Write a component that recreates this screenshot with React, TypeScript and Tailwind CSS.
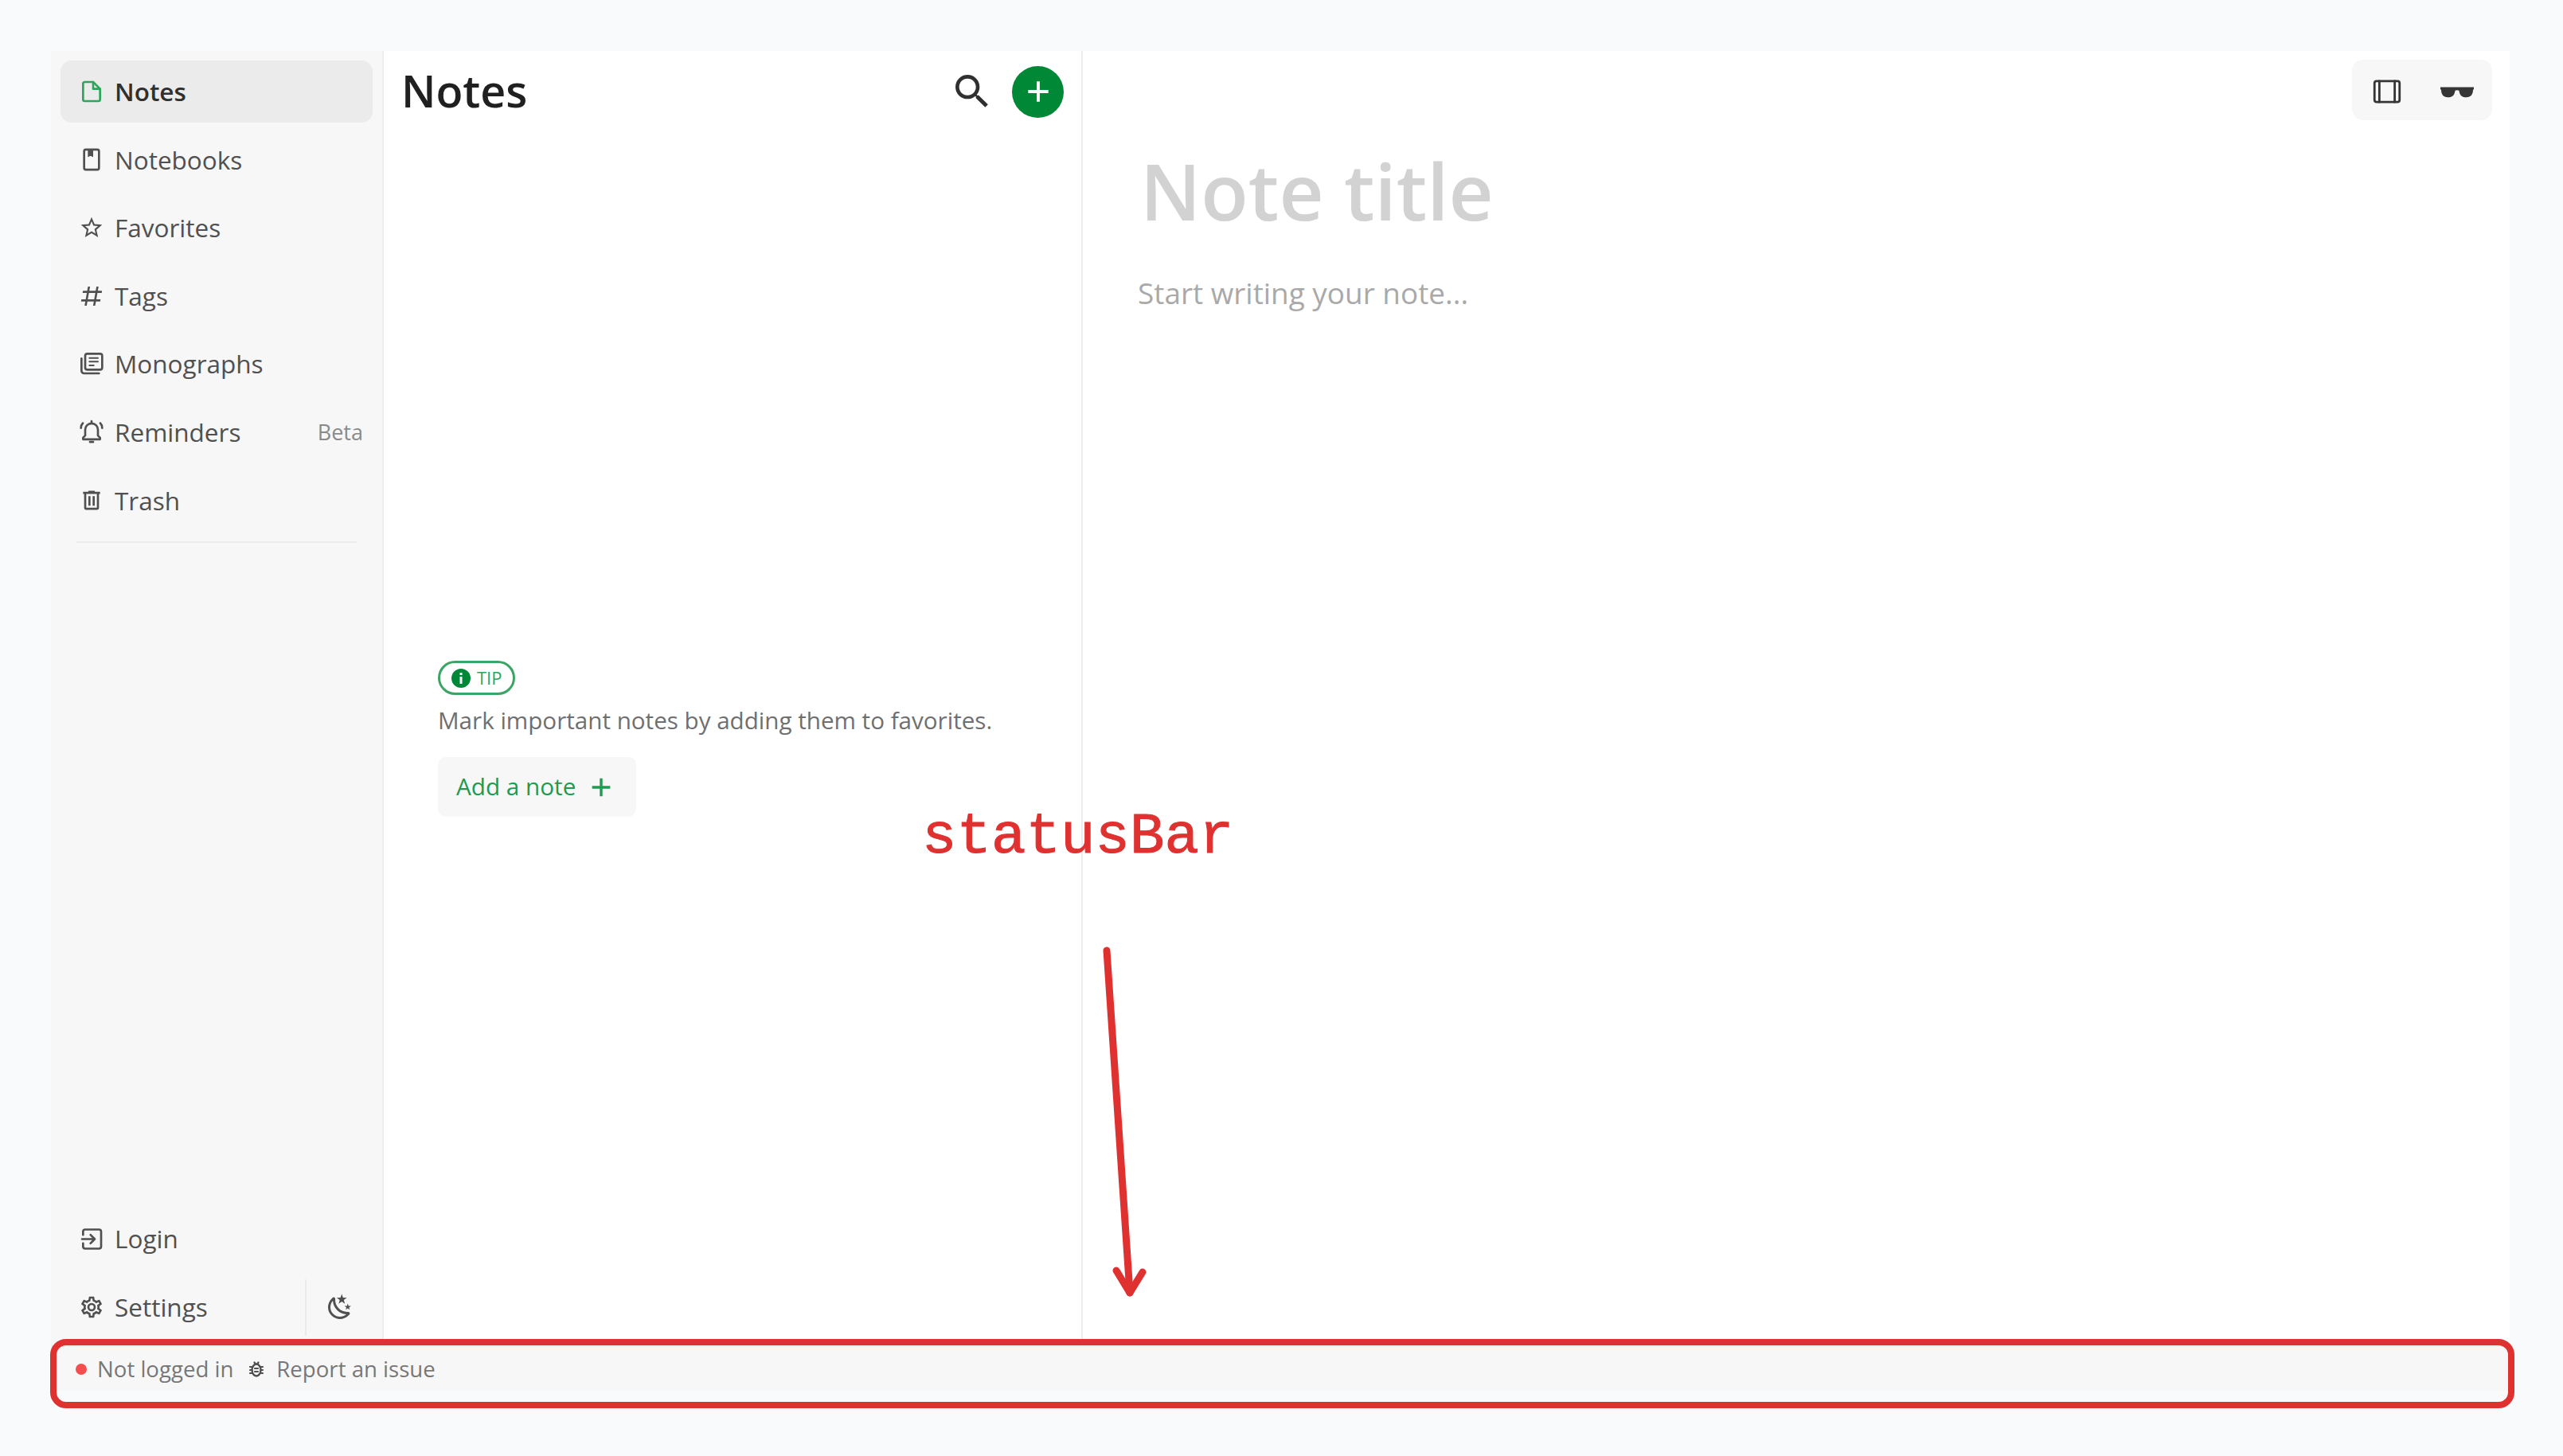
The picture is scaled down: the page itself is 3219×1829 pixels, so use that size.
import React from 'react';

const paths = {
  star: 'M12,15.39L8.24,17.66L9.23,13.38L5.91,10.5L10.29,10.13L12,6.09L13.71,10.13L18.09,10.5L14.77,13.38L15.76,17.66M22,9.24L14.81,8.63L12,2L9.19,8.62L2,9.24L7.45,13.97L5.82,21L12,17.27L18.18,21L16.54,13.97L22,9.24Z',
  pound: 'M5.41,21L6.12,17H2.12L2.47,15H6.47L7.53,9H3.53L3.88,7H7.88L8.59,3H10.59L9.88,7H15.88L16.59,3H18.59L17.88,7H21.88L21.53,9H17.53L16.47,15H20.47L20.12,17H16.12L15.41,21H13.41L14.12,17H8.12L7.41,21H5.41M9.53,9L8.47,15H14.47L15.53,9H9.53Z',
  trash: 'M9,3V4H4V6H5V19A2,2 0 0,0 7,21H17A2,2 0 0,0 19,19V6H20V4H15V3H9M7,6H17V19H7V6M9,8V17H11V8H9M13,8V17H15V8H13Z',
  cog: 'M12,8A4,4 0 0,1 16,12A4,4 0 0,1 12,16A4,4 0 0,1 8,12A4,4 0 0,1 12,8M12,10A2,2 0 0,0 10,12A2,2 0 0,0 12,14A2,2 0 0,0 14,12A2,2 0 0,0 12,10M10,22C9.75,22 9.54,21.82 9.5,21.58L9.13,18.93C8.5,18.68 7.96,18.34 7.44,17.94L4.95,18.95C4.73,19.03 4.46,18.95 4.34,18.73L2.34,15.27C2.21,15.05 2.27,14.78 2.46,14.63L4.57,12.97L4.5,12L4.57,11L2.46,9.37C2.27,9.22 2.21,8.95 2.34,8.73L4.34,5.27C4.46,5.05 4.73,4.96 4.95,5.05L7.44,6.05C7.96,5.66 8.5,5.32 9.13,5.07L9.5,2.42C9.54,2.18 9.75,2 10,2H14C14.25,2 14.46,2.18 14.5,2.42L14.87,5.07C15.5,5.32 16.04,5.66 16.56,6.05L19.05,5.05C19.27,4.96 19.54,5.05 19.66,5.27L21.66,8.73C21.79,8.95 21.73,9.22 21.54,9.37L19.43,11L19.5,12L19.43,13L21.54,14.63C21.73,14.78 21.79,15.05 21.66,15.27L19.66,18.73C19.54,18.95 19.27,19.04 19.05,18.95L16.56,17.95C16.04,18.34 15.5,18.68 14.87,18.93L14.5,21.58C14.46,21.82 14.25,22 14,22H10M11.25,4L10.88,6.61C9.68,6.86 8.62,7.5 7.85,8.39L5.44,7.35L4.69,8.65L6.8,10.2C6.4,11.37 6.4,12.64 6.8,13.8L4.68,15.36L5.43,16.66L7.86,15.62C8.63,16.5 9.68,17.14 10.87,17.38L11.24,20H12.76L13.13,17.39C14.32,17.14 15.37,16.5 16.14,15.62L18.57,16.66L19.32,15.36L17.2,13.81C17.6,12.64 17.6,11.37 17.2,10.2L19.31,8.65L18.56,7.35L16.15,8.39C15.38,7.5 14.32,6.86 13.12,6.62L12.75,4H11.25Z',
  moon: 'M17.75,4.09L15.22,6.03L16.13,9.09L13.5,7.28L10.87,9.09L11.78,6.03L9.25,4.09L12.44,4L13.5,1L14.56,4L17.75,4.09M21.25,11L19.61,12.25L20.2,14.23L18.5,13.06L16.8,14.23L17.39,12.25L15.75,11L17.81,10.95L18.5,9L19.19,10.95L21.25,11M18.97,15.95C19.8,15.87 20.69,17.05 20.16,17.8C19.84,18.25 19.5,18.67 19.08,19.07C15.17,23 8.84,23 4.94,19.07C1.03,15.17 1.03,8.83 4.94,4.93C5.34,4.53 5.76,4.17 6.21,3.85C6.96,3.32 8.14,4.21 8.06,5.04C7.79,7.9 8.75,10.87 10.95,13.06C13.14,15.26 16.1,16.22 18.97,15.95M17.33,17.97C14.5,17.81 11.7,16.64 9.53,14.5C7.36,12.31 6.2,9.5 6.04,6.68C3.23,9.82 3.34,14.64 6.35,17.66C9.37,20.67 14.19,20.78 17.33,17.97Z',
  magnify: 'M9.5,3A6.5,6.5 0 0,1 16,9.5C16,11.11 15.41,12.59 14.44,13.73L14.71,14H15.5L20.5,19L19,20.5L14,15.5V14.71L13.73,14.44C12.59,15.41 11.11,16 9.5,16A6.5,6.5 0 0,1 3,9.5A6.5,6.5 0 0,1 9.5,3M9.5,5C7,5 5,7 5,9.5C5,12 7,14 9.5,14C12,14 14,12 14,9.5C14,7 12,5 9.5,5Z',
  sunglasses: 'M1.5 9.2H22.5V10.6L22 10.9C22 13.8 20.6 15.6 17.8 15.6H17C14.8 15.6 13.6 14 13.2 11.4C12.4 11 11.6 11 10.8 11.4C10.4 14 9.2 15.6 7 15.6H6.2C3.4 15.6 2 13.8 2 10.9L1.5 10.6Z',
};

function Svg({ size, className, children }: { size: number; className?: string; children: React.ReactNode }) {
  return (
    <svg width={size} height={size} viewBox="0 0 24 24" fill="none" stroke="currentColor" strokeWidth={2} strokeLinecap="round" strokeLinejoin="round" className={className}>
      {children}
    </svg>
  );
}

function Solid({ d, size = 32, className }: { d: string; size?: number; className?: string }) {
  return (
    <svg width={size} height={size} viewBox="0 0 24 24" fill="currentColor" className={className}>
      <path d={d} />
    </svg>
  );
}

const NoteIcon = () => (
  <Svg size={34} className="text-[#2ea55a]">
    <path d="M13.5 3H5.5A1.5 1.5 0 0 0 4 4.5v15A1.5 1.5 0 0 0 5.5 21h13a1.5 1.5 0 0 0 1.5-1.5V9.5z" />
    <path d="M13.5 3v6.5H20" />
  </Svg>
);

const NotebookIcon = () => (
  <Svg size={35}>
    <rect x="5" y="2.5" width="14" height="19" rx="1.6" />
    <path d="M9 3h4v6l-2-1.4L9 9z" fill="currentColor" strokeWidth={1} />
  </Svg>
);

const MonographIcon = () => (
  <Svg size={36}>
    <path d="M2.5 7v11.5A2.5 2.5 0 0 0 5 21h14" />
    <rect x="6" y="2.5" width="16" height="15" rx="2" />
    <path d="M10 6.5h8M10 10h8M10 13.5h4" strokeWidth={1.5} />
  </Svg>
);

const BellIcon = () => (
  <Svg size={35}>
    <path d="M12 4a6 6 0 0 1 6 6v5.5l2 2V19H4v-1.5l2-2V10a6 6 0 0 1 6-6z" />
    <path d="M10.5 21.5h3M12 2v2M3.8 3.8C2.6 5 2 6.6 2 8.4M20.2 3.8C21.4 5 22 6.6 22 8.4" />
  </Svg>
);

const LoginIcon = () => (
  <Svg size={33}>
    <path d="M4 8V5a2 2 0 0 1 2-2h13a2 2 0 0 1 2 2v14a2 2 0 0 1-2 2H6a2 2 0 0 1-2-2v-3" />
    <path d="M3 12h12M11 8l4 4-4 4" />
  </Svg>
);

const BugIcon = () => (
  <Svg size={24}>
    <ellipse cx="12" cy="13" rx="5.5" ry="7.5" strokeWidth={2.4} />
    <path d="M9.5 3.5l1.4 2M14.5 3.5l-1.4 2M4 9h2.5M17.5 9H20M4 13h2.5M17.5 13H20M4 17h2.5M17.5 17H20M10 11h4M10 15h4" strokeWidth={2.2} />
  </Svg>
);

const PaneIcon = () => (
  <Svg size={42}>
    <rect x="3" y="4.5" width="18" height="15" rx="1.5" strokeWidth={1.6} />
    <path d="M6.5 4.5v15M17.5 4.5v15" strokeWidth={1.6} />
  </Svg>
);

function PlusIcon({ size, className }: { size: number; className?: string }) {
  return (
    <Svg size={size} className={className}>
      <path d="M12 4v16M4 12h16" strokeLinecap="butt" strokeWidth={2.4} />
    </Svg>
  );
}

const navItems = [
  { label: 'Notes', icon: <NoteIcon />, active: true },
  { label: 'Notebooks', icon: <NotebookIcon /> },
  { label: 'Favorites', icon: <Solid d={paths.star} /> },
  { label: 'Tags', icon: <Solid d={paths.pound} size={34} /> },
  { label: 'Monographs', icon: <MonographIcon /> },
  { label: 'Reminders', icon: <BellIcon />, badge: 'Beta' },
  { label: 'Trash', icon: <Solid d={paths.trash} size={35} /> },
];

function NavRow({ label, icon, active, badge }: { label: string; icon: React.ReactNode; active?: boolean; badge?: string }) {
  return (
    <div className={`flex h-[78px] items-center rounded-[14px] pl-[23px] pr-[12px] ${active ? 'bg-[#ebebeb] font-semibold text-[#303030]' : 'text-[#505050]'}`}>
      <span className="mr-[13px] flex w-[32px] justify-center">{icon}</span>
      <span className="flex-1">{label}</span>
      {badge && <span className="text-[27px] text-[#8a8a8a]">{badge}</span>}
    </div>
  );
}

function Sidebar() {
  return (
    <aside className="flex w-[418px] flex-col justify-between border-r-2 border-[#ededed] bg-[#f7f7f7] px-[12px] pt-[12px] text-[31.5px] leading-[44px]">
      <div>
        <nav className="flex flex-col gap-[7.6px]">
          {navItems.map((item) => (
            <NavRow key={item.label} {...item} />
          ))}
        </nav>
        <div className="mx-[20px] mt-[12px] h-[2px] bg-[#ebebeb]" />
      </div>
      <div className="flex flex-col gap-[8px] pb-[9px]">
        <NavRow label="Login" icon={<LoginIcon />} />
        <div className="flex items-center">
          <div className="flex-1">
            <NavRow label="Settings" icon={<Solid d={paths.cog} size={34} />} />
          </div>
          <div className="flex h-[71px] w-[85px] items-center justify-center border-l-2 border-[#ebebeb] text-[#505050]">
            <Solid d={paths.moon} size={36} />
          </div>
        </div>
      </div>
    </aside>
  );
}

function NotesList() {
  return (
    <section className="flex w-[878px] flex-col border-r-2 border-[#ededed] bg-white">
      <header className="flex h-[102px] items-center justify-between pl-[22px] pr-[22px]">
        <h1 className="mb-[2px] text-[55.5px] font-semibold text-[#202020]">Notes</h1>
        <div className="flex items-center gap-[22px]">
          <Solid d={paths.magnify} size={56} className="text-[#303030]" />
          <button className="flex h-[65px] w-[65px] items-center justify-center rounded-full bg-[#008837]">
            <PlusIcon size={38} className="text-white" />
          </button>
        </div>
      </header>
      <div className="flex flex-1 flex-col items-start justify-center px-[68px]">
        <div className="flex h-[43px] items-center gap-[8px] rounded-full border-[3px] border-[#3aa565] pl-[14px] pr-[13px] text-[22px] text-[#2ea55a]">
          <svg width="24" height="24" viewBox="0 0 24 24" className="text-[#008837]">
            <circle cx="12" cy="12" r="12" fill="currentColor" />
            <path d="M10.5 10h3v9h-3zM10.5 5h3v3h-3z" fill="#fff" />
          </svg>
          <span>TIP</span>
        </div>
        <p className="mt-[11px] text-[29.6px] leading-[42px] text-[#6f6f6f]">Mark important notes by adding them to favorites.</p>
        <button className="mt-[25px] flex h-[75px] w-[249px] items-center rounded-[10px] bg-[#f7f7f7] pl-[23px] text-[29.7px] text-[#1f9a50]">
          <span>Add a note</span>
          <PlusIcon size={34} className="ml-[15px] text-[#1f9a50]" />
        </button>
      </div>
    </section>
  );
}

function Editor() {
  return (
    <section className="flex flex-1 flex-col bg-white">
      <div className="flex justify-end pr-[22px] pt-[11px]">
        <div className="flex h-[76px] w-[176px] items-center justify-between rounded-[14px] bg-[#f7f7f7] pl-[23px] pr-[20px] pt-[3px] text-[#353535]">
          <PaneIcon />
          <Solid d={paths.sunglasses} size={48} />
        </div>
      </div>
      <div className="pl-[69px]">
        <h2 className="ml-[3px] mt-[24px] text-[97.5px] font-semibold leading-[130px] text-[#d2d2d2]">Note title</h2>
        <p className="mt-[37px] text-[36.9px] leading-[52px] text-[#a9a9a9]">Start writing your note...</p>
      </div>
    </section>
  );
}

function StatusBar() {
  return (
    <footer className="flex h-[57px] items-center border-t-2 border-[#ededed] bg-[#f7f7f7] pl-[31px] text-[27.6px] text-[#777777]">
      <span className="h-[14px] w-[14px] rounded-full bg-[#f44e4e]" />
      <span className="ml-[13px]">Not logged in</span>
      <span className="ml-[17px] flex text-[#505050]">
        <BugIcon />
      </span>
      <span className="ml-[13px]">Report an issue</span>
    </footer>
  );
}

export default function App() {
  return (
    <div className="relative h-[1829px] w-[3219px] overflow-hidden bg-[#f9fafc] pb-[82px] pl-[64px] pr-[67px] pt-[64px] font-['Open_Sans',sans-serif]">
      <div className="flex h-full flex-col">
        <div className="flex min-h-0 flex-1">
          <Sidebar />
          <NotesList />
          <Editor />
        </div>
        <StatusBar />
      </div>

      {/* red annotation on top of the screenshot */}
      <div className="absolute left-[63px] top-[1682px] h-[87px] w-[3095px] rounded-[20px] border-[8px] border-[#e03131]" />
      <div className="absolute left-[1158px] top-[1004px] font-['Liberation_Mono',monospace] text-[72.5px] leading-[96px] text-[#e03131] [-webkit-text-stroke:1px_#e03131]">statusBar</div>
      <svg className="absolute left-[1370px] top-[1170px]" width="90" height="480" viewBox="0 0 90 480" fill="none" stroke="#e03131" strokeWidth="9" strokeLinecap="round" strokeLinejoin="round">
        <path d="M20 24L49 454" />
        <path d="M32 426L49 454L65 428" />
      </svg>
    </div>
  );
}
